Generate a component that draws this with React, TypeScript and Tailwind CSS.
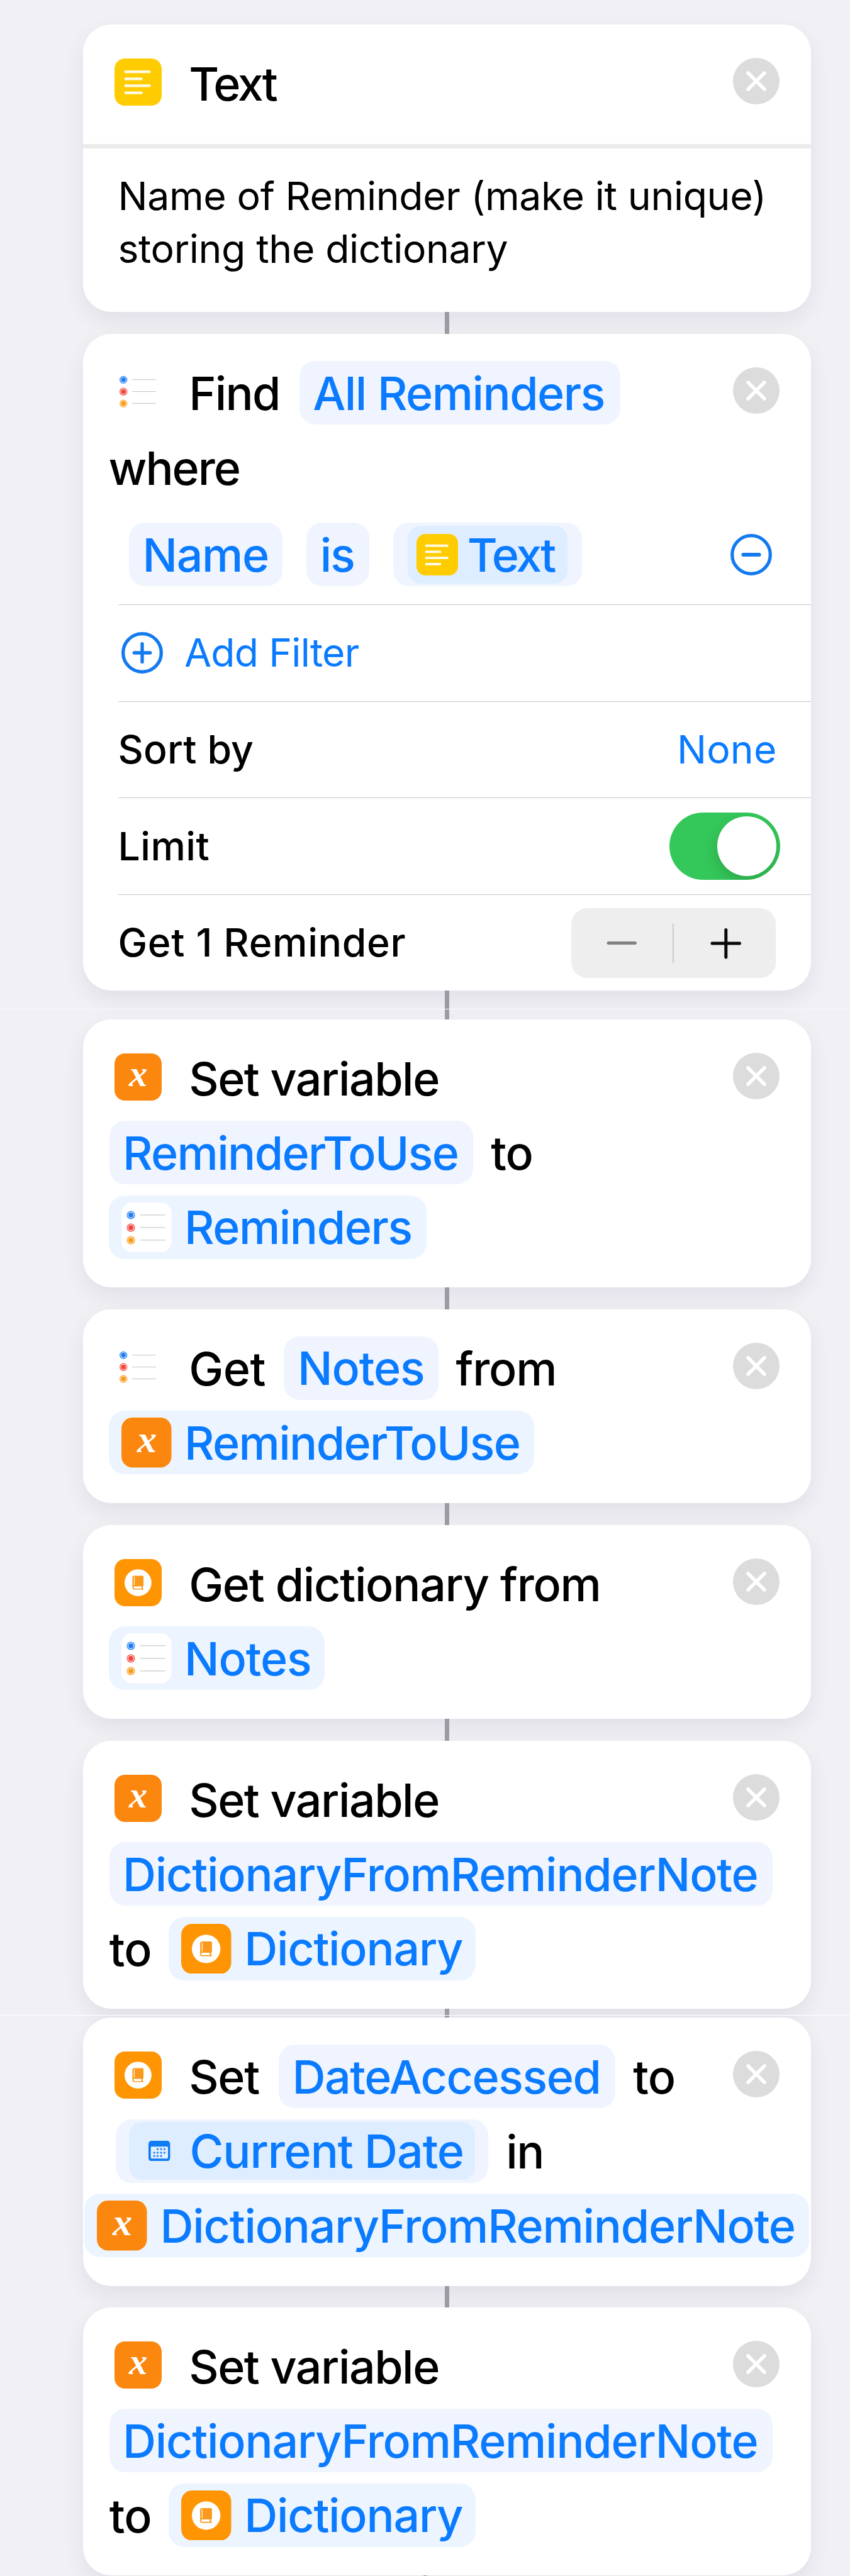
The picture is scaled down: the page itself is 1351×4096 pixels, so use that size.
import React from "react";

type Kind = "text" | "reminders" | "variable" | "dictionary";

function TextGlyph() {
  return (
    <svg viewBox="0 0 75 75" className="block h-full w-full">
      <rect width="75" height="75" rx="16.5" fill="#ffcc02" />
      <g fill="#fffbe6">
        <rect x="15.8" y="19" width="41.6" height="4.3" rx="1" />
        <rect x="15.8" y="30.2" width="28.6" height="4.3" rx="1" />
        <rect x="15.8" y="41.2" width="41.6" height="4.3" rx="1" />
        <rect x="15.8" y="52.4" width="28.6" height="4.3" rx="1" />
      </g>
    </svg>
  );
}

function RemindersGlyph() {
  const rows: [number, string][] = [
    [20, "#1f7cf0"],
    [40, "#f4433c"],
    [60, "#f99a17"],
  ];
  return (
    <svg viewBox="0 0 79.5 79.5" className="block h-full w-full">
      <rect width="79.5" height="79.5" rx="17.5" fill="#ffffff" />
      {rows.map(([y, color]) => (
        <g key={y}>
          <circle cx="15" cy={y} r="5.8" fill="#ffffff" stroke={color} strokeWidth="1.6" strokeOpacity="0.85" />
          <circle cx="15" cy={y} r="4" fill={color} />
          <rect x="29.5" y={y - 0.7} width="40.5" height="1.1" fill="#c4c4c4" />
        </g>
      ))}
    </svg>
  );
}

function VariableGlyph() {
  return (
    <svg viewBox="0 0 79.5 79.5" className="block h-full w-full overflow-visible">
      <rect width="79.5" height="79.5" rx="17.5" fill="#fc870f" />
      <text
        x="39.8"
        y="55"
        textAnchor="middle"
        fontSize="62"
        fill="#ffffff"
        className="font-['Liberation_Serif',serif] font-bold italic"
      >
        x
      </text>
    </svg>
  );
}

function DictionaryGlyph() {
  return (
    <svg viewBox="0 0 75 75" className="block h-full w-full">
      <rect width="75" height="75" rx="16.5" fill="#ff9503" />
      <circle cx="37.4" cy="37.6" r="21.4" fill="#ffffff" />
      <path
        d="M31.4 26.4H44.4Q46.1 26.4 46.1 28.1V42.2L45 43.4V47H46.1V48.6H31.2Q28.4 48.6 28.4 45.6V29.4Q28.4 26.4 31.4 26.4Z"
        fill="#f99a1c"
      />
      <path d="M31.4 28V41.4" stroke="#ffffff" strokeWidth="1.1" />
      <path d="M31.5 43.4H42.9V46.9H31.5Q30 46.9 30 45.1T31.5 43.4Z" fill="#ffffff" />
    </svg>
  );
}

function CalendarGlyph() {
  const dots: [number, number][] = [
    [51, 47], [71, 47], [90, 47],
    [32, 67], [51, 67], [71, 67], [90, 67],
    [32, 86], [51, 86], [71, 86],
  ];
  return (
    <svg viewBox="0 0 122 115" className="block h-[32.4px] w-[34.4px]">
      <rect width="122" height="115" rx="17" fill="#0f7bf5" />
      <rect x="13" y="33" width="97" height="67" rx="5" fill="#e3f1ff" />
      {dots.map(([x, y]) => (
        <rect key={`${x}-${y}`} x={x - 5} y={y - 5} width="10.5" height="10.5" rx="2.5" fill="#2b87f5" />
      ))}
    </svg>
  );
}

function Glyph({ kind, className }: { kind: Kind; className: string }) {
  return (
    <span className={`block shrink-0 ${className}`}>
      {kind === "text" && <TextGlyph />}
      {kind === "reminders" && <RemindersGlyph />}
      {kind === "variable" && <VariableGlyph />}
      {kind === "dictionary" && <DictionaryGlyph />}
    </span>
  );
}

function Close() {
  return (
    <svg viewBox="0 0 74 74" className="mt-[10px] mr-[49.5px] ml-auto block h-[74px] w-[74px] shrink-0 self-start">
      <circle cx="37" cy="37" r="37" fill="#dcdcdc" />
      <path d="M24 24L50 50M50 24L24 50" stroke="#ffffff" strokeWidth="5.6" strokeLinecap="round" />
    </svg>
  );
}

function Word({ children, className }: { children: string; className: string }) {
  return <span className={`block whitespace-pre leading-[103px] ${className}`}>{children}</span>;
}

/* Pale blue token; the icon variant carries an app glyph in front of its label. */
function Token({ children, className, icon }: { children: string; className: string; icon?: Kind }) {
  return (
    <span
      className={`flex h-[101px] shrink-0 items-center rounded-[25px] text-[#0a7aff] ${
        icon ? "bg-[#ecf5ff] pl-[20.5px]" : "bg-[#eff4ff] pl-[21.5px]"
      } ${className}`}
    >
      {icon && <Glyph kind={icon} className="mr-[20.5px] h-[79.5px] w-[79.5px]" />}
      <span className="block whitespace-pre pt-[2px] leading-[102px]">{children}</span>
    </span>
  );
}

function Header({ icon, children }: { icon: Kind; children: React.ReactNode }) {
  return (
    <div className="flex h-[100.5px] pl-[50.7px]">
      <Glyph kind={icon} className="mt-[11px] mr-[43px] h-[75px] w-[75px]" />
      {children}
      <Close />
    </div>
  );
}

function Line({ children, className }: { children: React.ReactNode; className: string }) {
  return <div className={`mt-[18px] flex h-[100.5px] ${className}`}>{children}</div>;
}

function Card({ children, className }: { children: React.ReactNode; className: string }) {
  return (
    <section
      className={`ml-[131.5px] w-[1157px] shrink-0 rounded-[45px] bg-white pt-[43.3px] shadow-[0_14px_36px_rgba(30,10,50,0.07)] ${className}`}
    >
      {children}
    </section>
  );
}

function Connector({ className, children }: { className: string; children?: React.ReactNode }) {
  return (
    <div className={`relative shrink-0 ${className}`}>
      <div className="ml-[707px] h-full w-[6.5px] bg-[#9c9ba3]" />
      {children}
    </div>
  );
}

function OptionRow({ children }: { children: React.ReactNode }) {
  return (
    <div className="ml-[56px] flex h-[153.65px] items-center border-t border-[#c6c6c8] text-[62.5px]">{children}</div>
  );
}

function SetDictionaryVariable({ className }: { className: string }) {
  return (
    <Card className={className}>
      <Header icon="variable">
        <Word className="tracking-[-1.49px]">Set variable</Word>
      </Header>
      <Line className="pl-[42px]">
        <Token className="w-[1054.5px] tracking-[-1.24px]">DictionaryFromReminderNote</Token>
      </Line>
      <Line className="pl-[42.3px]">
        <Word className="tracking-[-0.9px]">to</Word>
        <Token icon="dictionary" className="ml-[27px] w-[488px] tracking-[-1.27px]">
          Dictionary
        </Token>
      </Line>
    </Card>
  );
}

export default function App() {
  return (
    <main className="flex h-[4096px] w-[1351px] flex-col overflow-hidden bg-[#f1f0f5] pt-[39px] font-['Inter','Liberation_Sans',sans-serif] text-[73.5px] font-medium text-black">
      <Card className="h-[457px]">
        <Header icon="text">
          <Word className="tracking-[-3.16px]">Text</Word>
        </Header>
        <div className="mt-[46.7px] h-[7px] bg-[#ececec]" />
        <p className="mt-[33.5px] pl-[56px] text-[62.5px] leading-[83.7px] font-normal tracking-[-0.38px] whitespace-pre">
          Name of Reminder (make it unique){"\n"}storing the dictionary
        </p>
      </Card>

      <Connector className="h-[35px]" />

      <Card className="h-[1044px]">
        <Header icon="reminders">
          <Word className="tracking-[-1.75px]">Find</Word>
          <Token className="ml-[31px] w-[510.3px] tracking-[-1.51px]">All Reminders</Token>
        </Header>
        <Line className="pl-[41px]">
          <Word className="tracking-[-2.04px]">where</Word>
        </Line>
        <div className="mt-[37.8px] flex h-[100.5px] pl-[73.5px]">
          <Token className="w-[243.7px] tracking-[-1.4px]">Name</Token>
          <Token className="ml-[38.5px] w-[99.9px] tracking-[-2.02px]">is</Token>
          <span className="ml-[37.7px] flex h-[101px] w-[300.3px] items-center rounded-[25px] bg-[#eff4ff] pl-[23.6px]">
            <span className="flex h-[92px] w-[254px] items-center rounded-[21px] bg-[#deedff] pl-[14px] text-[#0a7aff]">
              <Glyph kind="text" className="mr-[14.4px] h-[66px] w-[66px]" />
              <span className="block pt-[2px] leading-[92px] tracking-[-3.16px]">Text</span>
            </span>
          </span>
          <svg viewBox="0 0 66 66" className="mt-[18px] mr-[61.5px] ml-auto block h-[66px] w-[66px]">
            <circle cx="33" cy="33" r="30.3" fill="none" stroke="#147aef" strokeWidth="5.3" />
            <path d="M20.3 33H45.7" stroke="#147aef" strokeWidth="5.8" strokeLinecap="round" />
          </svg>
        </div>
        <div className="h-[29.4px]" />
        <OptionRow>
          <svg viewBox="0 0 66 66" className="ml-[5px] block h-[66px] w-[66px]">
            <circle cx="33" cy="33" r="30.3" fill="none" stroke="#147aef" strokeWidth="5.3" />
            <path d="M20.3 33H45.7M33 18.6V47.4" stroke="#147aef" strokeWidth="5.4" strokeLinecap="round" />
          </svg>
          <span className="ml-[34.5px] font-normal tracking-[-0.77px] text-[#0a7aff]">Add Filter</span>
        </OptionRow>
        <OptionRow>
          <span className="tracking-[0.13px]">Sort by</span>
          <span className="mr-[54px] ml-auto font-normal tracking-[0.14px] text-[#0a7aff]">None</span>
        </OptionRow>
        <OptionRow>
          <span className="tracking-[0.41px]">Limit</span>
          <span className="mr-[48.5px] ml-auto flex h-[107.6px] w-[176px] items-center overflow-hidden rounded-full bg-[#34c759]">
            <span className="ml-[75.6px] h-[94.5px] w-[94.5px] rounded-full bg-white shadow-[0_9px_22px_rgba(0,0,0,0.16)]" />
          </span>
        </OptionRow>
        <OptionRow>
          <span className="tracking-[0.65px]">Get 1 Reminder</span>
          <svg viewBox="0 0 325.5 111.3" className="mr-[55.5px] ml-auto block h-[111.3px] w-[325.5px]">
            <rect width="325.5" height="111.3" rx="26" fill="#eeeeef" />
            <path d="M59 55.4H101.5" stroke="#808080" strokeWidth="5" strokeLinecap="round" />
            <rect x="160.6" y="24" width="2.6" height="63.5" rx="1.3" fill="#d2d2d4" />
            <path d="M224 56H267.5M245.8 34.4V78" stroke="#0a0a0a" strokeWidth="5" strokeLinecap="round" />
          </svg>
        </OptionRow>
      </Card>

      <Connector className="h-[45.5px]">
        <div className="absolute top-[29px] left-0 h-px w-full bg-[#f9f9fb]" />
      </Connector>

      <Card className="h-[426.5px]">
        <Header icon="variable">
          <Word className="tracking-[-1.49px]">Set variable</Word>
        </Header>
        <Line className="pl-[42px]">
          <Token className="w-[578.7px] tracking-[-1.63px]">ReminderToUse</Token>
          <Word className="ml-[28px] tracking-[-0.9px]">to</Word>
        </Line>
        <Line className="pl-[41px]">
          <Token icon="reminders" className="w-[505.6px] tracking-[-1.43px]">
            Reminders
          </Token>
        </Line>
      </Card>

      <Connector className="h-[34.5px]" />

      <Card className="h-[308.5px]">
        <Header icon="reminders">
          <Word className="tracking-[-0.46px]">Get</Word>
          <Token className="ml-[29.5px] w-[246px] tracking-[-1.11px]">Notes</Token>
          <Word className="ml-[27px] tracking-[-1.17px]">from</Word>
        </Header>
        <Line className="pl-[41px]">
          <Token icon="variable" className="w-[676px] tracking-[-1.63px]">
            ReminderToUse
          </Token>
        </Line>
      </Card>

      <Connector className="h-[34.5px]" />

      <Card className="h-[308.5px]">
        <Header icon="dictionary">
          <Word className="tracking-[-1.3px]">Get dictionary from</Word>
        </Header>
        <Line className="pl-[41px]">
          <Token icon="reminders" className="w-[343.6px] tracking-[-1.11px]">
            Notes
          </Token>
        </Line>
      </Card>

      <Connector className="h-[34.5px]" />

      <SetDictionaryVariable className="h-[426px]" />

      <Connector className="h-[14.5px]">
        <div className="absolute top-[10px] left-0 h-[1.5px] w-full bg-white" />
      </Connector>

      <Card className="h-[426.5px]">
        <Header icon="dictionary">
          <Word className="tracking-[-1.33px]">Set</Word>
          <Token className="ml-[31px] w-[535.4px] tracking-[-1.42px]">DateAccessed</Token>
          <Word className="ml-[28px] tracking-[-0.9px]">to</Word>
        </Header>
        <Line className="pl-[52.7px]">
          <span className="flex h-[101px] w-[592px] items-center rounded-[25px] bg-[#eff4ff] pl-[21px]">
            <span className="flex h-[92px] w-[549.5px] items-center rounded-[21px] bg-[#deedff] pl-[31px] text-[#0a7aff]">
              <CalendarGlyph />
              <span className="ml-[31px] block pt-[2px] leading-[92px] tracking-[-1.12px] whitespace-pre">
                Current Date
              </span>
            </span>
          </span>
          <Word className="ml-[28px] tracking-[-1.52px]">in</Word>
        </Line>
        <Line className="pl-[2.4px]">
          <Token icon="variable" className="w-[1152.6px] tracking-[-1.24px]">
            DictionaryFromReminderNote
          </Token>
        </Line>
      </Card>

      <Connector className="h-[34px]" />

      <SetDictionaryVariable className="h-[426px]" />

      <div className="ml-[672.5px] h-[3px] w-[6.5px] shrink-0 bg-[#9c9ba3]" />
    </main>
  );
}
